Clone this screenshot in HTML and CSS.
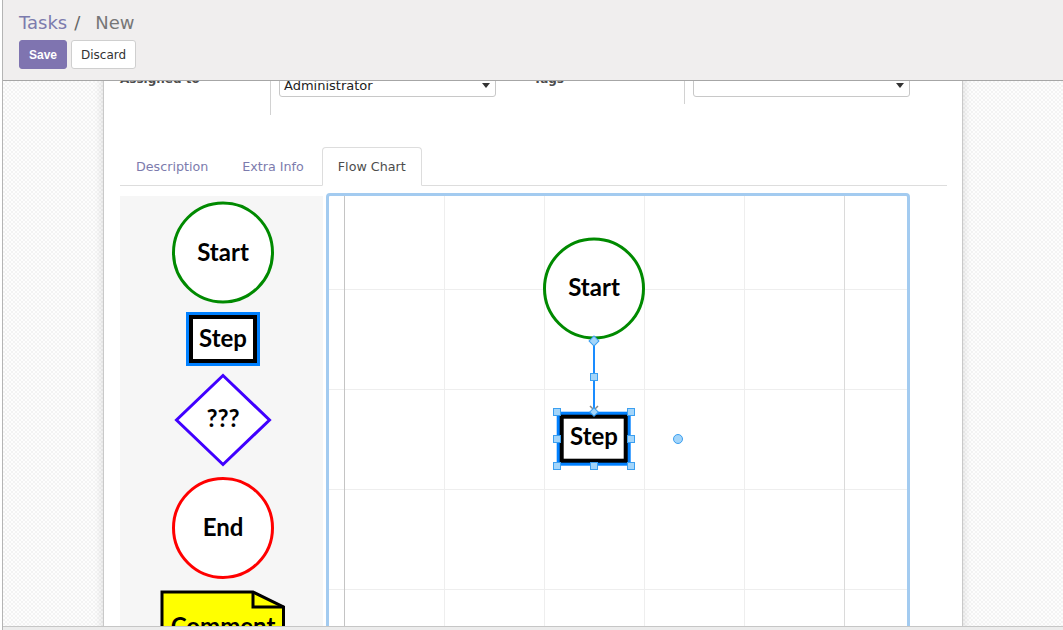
FILE: index.html
```html
<!DOCTYPE html>
<html lang="en">
<head>
<meta charset="utf-8">
<title>Tasks / New</title>
<link rel="stylesheet" href="styles.css">
</head>
<body>
<div class="app">
  <header class="cp">
    <ol class="crumbs">
      <li class="crumb-link">Tasks</li>
      <li class="crumb-sep">/</li>
      <li class="crumb-current">New</li>
    </ol>
    <div class="cp-buttons">
      <button class="btn btn-primary">Save</button>
      <button class="btn">Discard</button>
    </div>
  </header>
  <div class="main">
    <div class="sheet">
      <div class="fields">
        <div class="field-group">
          <div class="field-label tall">Assigned to</div>
          <div class="select"><span>Administrator</span><span class="caret"></span></div>
        </div>
        <div class="field-group">
          <div class="field-label short">Tags</div>
          <div class="select"><span></span><span class="caret"></span></div>
        </div>
      </div>
      <ul class="tabs">
        <li class="tab">Description</li>
        <li class="tab">Extra Info</li>
        <li class="tab active">Flow Chart</li>
      </ul>
      <div class="flow">
        <div class="palette">
          <svg class="shapes" width="203" height="460" viewBox="0 0 203 460">
            <circle cx="103" cy="56.5" r="49.5" fill="#fff" stroke="#008a00" stroke-width="3"/>
            <text x="103" y="64.5" class="shape-text">Start</text>
            <rect x="66" y="116" width="74" height="54" fill="#0080ff"/>
            <rect x="71" y="121" width="64" height="44" fill="#fff" stroke="#000" stroke-width="4"/>
            <text x="103" y="151" class="shape-text">Step</text>
            <polygon points="103,179.5 149.5,224 103,268.5 56.5,224" fill="#fff" stroke="#4000ff" stroke-width="3"/>
            <text x="103" y="231" class="shape-text">???</text>
            <circle cx="103" cy="332" r="49.5" fill="#fff" stroke="#ff0000" stroke-width="3"/>
            <text x="103" y="340" class="shape-text">End</text>
            <path d="M42 396 H133 L163.5 411 V470 H42 Z" fill="#ffff00" stroke="#000" stroke-width="3" stroke-linejoin="miter"/>
            <path d="M133 396 V411 H163.5" fill="none" stroke="#000" stroke-width="3"/>
            <text x="103" y="439" class="shape-text">Comment</text>
          </svg>
        </div>
        <div class="canvas">
          <svg class="shapes" width="578" height="594" viewBox="0 0 578 594">
            <line x1="15.5" y1="0" x2="15.5" y2="594" stroke="#c4c4c4" stroke-width="1"/>
            <line x1="515.5" y1="0" x2="515.5" y2="594" stroke="#dadada" stroke-width="1"/>
            <circle cx="265" cy="92.5" r="49.5" fill="#fff" stroke="#008a00" stroke-width="3"/>
            <text x="265" y="100" class="shape-text">Start</text>
            <line x1="265" y1="145" x2="265" y2="214" stroke="#1a8cff" stroke-width="2"/>
            <path d="M261 210 L265 214 L269 210" fill="none" stroke="#888" stroke-width="1.5"/>
            <rect x="227.7" y="215.7" width="74" height="54" fill="#0080ff"/>
            <rect x="232.7" y="220.7" width="64" height="44" fill="#fff" stroke="#000" stroke-width="4"/>
            <text x="265" y="249" class="shape-text">Step</text>
            <g fill="#a3d5fa" stroke="#3b9ff0" stroke-width="1">
              <rect x="261.5" y="141.5" width="7" height="7" transform="rotate(45 265 145)"/>
              <rect x="261.5" y="177.5" width="7" height="7"/>
              <rect x="224.5" y="212.5" width="7" height="7"/>
              <rect x="298.5" y="212.5" width="7" height="7"/>
              <rect x="224.5" y="266.5" width="7" height="7"/>
              <rect x="298.5" y="266.5" width="7" height="7"/>
              <rect x="224.5" y="239.5" width="7" height="7"/>
              <rect x="298.5" y="239.5" width="7" height="7"/>
              <rect x="261.5" y="266.5" width="7" height="7"/>
              <rect x="262" y="213" width="6" height="6" transform="rotate(45 265 216)"/>
              <circle cx="349" cy="243" r="4.5"/>
            </g>
          </svg>
        </div>
      </div>
    </div>
  </div>
  <div class="bottom"></div>
</div>
</body>
</html>
```

FILE: styles.css
```css
* {
  box-sizing: border-box;
}

html,
body {
  margin: 0;
  height: 100%;
}

body {
  background: #fff;
  font-family: "DejaVu Sans", "Liberation Sans", sans-serif;
  color: #4c4c4c;
  overflow: hidden;
}

.app {
  margin-left: 2px;
  border-left: 1px solid #b4b4b4;
  height: 630px;
  display: flex;
  flex-direction: column;
}

/* control panel */
.cp {
  flex: none;
  height: 81px;
  background: #f0eeee;
  border-bottom: 1px solid #a6a6a6;
  padding: 11px 0 0 16px;
}

.crumbs {
  display: flex;
  align-items: baseline;
  margin: 0;
  padding: 0;
  list-style: none;
  font-size: 18px;
  line-height: 24px;
  height: 24px;
}

.crumb-link {
  color: #7c7bad;
}

.crumb-sep {
  color: #666;
  margin: 0 15px 0 7px;
}

.crumb-current {
  color: #777;
}

.cp-buttons {
  display: flex;
  gap: 4px;
  margin-top: 5px;
}

.btn {
  height: 29px;
  padding: 0 9px;
  border: 1px solid #cfcfcf;
  border-radius: 3px;
  background: #fff;
  color: #333;
  font-family: "DejaVu Sans", sans-serif;
  font-size: 12px;
}

.btn-primary {
  width: 48px;
  padding: 0;
  background: #7f74b0;
  border-color: #7f74b0;
  color: #fff;
  font-family: "Liberation Sans", Arial, sans-serif;
  font-weight: bold;
}

/* main area */
.main {
  flex: 1;
  min-height: 0;
  overflow: hidden;
  padding-left: 100px;
  background: repeating-conic-gradient(#f3f3f3 0 25%, #fdfdfd 0 50%) 0 0 / 4px 4px;
}

.sheet {
  width: 860px;
  min-height: 100%;
  background: #fff;
  border-left: 1px solid #c9c9c9;
  border-right: 1px solid #c9c9c9;
  box-shadow: 0 0 9px rgba(0, 0, 0, 0.14);
  padding: 0 15px 0 16px;
}

/* form fields (scrolled) */
.fields {
  display: grid;
  grid-template-columns: 1fr 1fr;
  margin-top: -10px;
}

.field-group {
  display: flex;
  align-items: flex-start;
}

.field-label {
  flex: none;
  width: 151px;
  border-right: 1px solid #d2d2d2;
  font-weight: bold;
  font-size: 12px;
  line-height: 16px;
  color: #4c4c4c;
}

.field-label.tall {
  height: 44px;
}

.field-label.short {
  height: 33px;
}

.select {
  margin: 2px 0 0 8px;
  width: 217px;
  height: 24px;
  border: 1px solid #c8c8c8;
  border-radius: 3px;
  display: flex;
  align-items: center;
  justify-content: space-between;
  padding: 0 5px 0 4px;
  font-size: 13px;
  color: #222;
}

.caret {
  width: 0;
  height: 0;
  border-left: 4px solid transparent;
  border-right: 4px solid transparent;
  border-top: 5px solid #333;
}

/* notebook tabs */
.tabs {
  display: flex;
  margin: 32px 0 0;
  padding: 0;
  list-style: none;
  border-bottom: 1px solid #dddddd;
}

.tab {
  margin: 0 2px -1px 0;
  padding: 10px 15px;
  line-height: 17px;
  font-size: 12.7px;
  color: #7c7bad;
  border: 1px solid transparent;
  border-radius: 4px 4px 0 0;
}

.tab.active {
  color: #4c4c4c;
  background: #fff;
  border-color: #dddddd #dddddd transparent;
}

/* flow chart editor */
.flow {
  display: flex;
  align-items: flex-start;
  margin-top: 7px;
}

.palette {
  flex: none;
  width: 203px;
  height: 600px;
  margin-top: 3px;
  background: #f6f6f6;
}

.canvas {
  flex: none;
  margin-left: 3px;
  width: 584px;
  height: 600px;
  border: 3px solid #a3cbf0;
  border-radius: 4px;
  background-color: #fff;
  background-image:
    linear-gradient(to right, #eeeeee 1px, transparent 1px),
    linear-gradient(to bottom, #eeeeee 1px, transparent 1px);
  background-size: 100px 100px;
  background-position: 15px 93px;
}

.shapes {
  display: block;
}

.shape-text {
  font-family: Lato, "Open Sans", sans-serif;
  font-weight: bold;
  font-size: 24px;
  text-anchor: middle;
  fill: #000;
}

.bottom {
  flex: none;
  height: 4px;
  border-top: 1px solid #c6c6c6;
  background: #ececec;
}
```
